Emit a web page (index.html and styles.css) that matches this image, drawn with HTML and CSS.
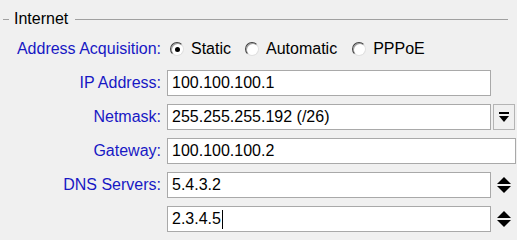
FILE: index.html
```html
<!DOCTYPE html>
<html lang="en">
<head>
  <meta charset="UTF-8" />
  <title>Internet</title>
  <link rel="stylesheet" href="styles.css">
</head>
<body>
  <div class="group-head">
    <span class="dash"></span>
    <span class="group-title">Internet</span>
    <span class="rule"></span>
  </div>

  <div class="acq-row">
    <span class="lbl">Address Acquisition:</span>
    <div class="radios">
      <span class="radio checked"></span><span class="opt">Static</span>
      <span class="radio"></span><span class="opt">Automatic</span>
      <span class="radio"></span><span class="opt">PPPoE</span>
    </div>
  </div>

  <div class="form">
    <span class="lbl">IP Address:</span>
    <div class="field">
      <div class="box">100.100.100.1</div>
    </div>

    <span class="lbl">Netmask:</span>
    <div class="field">
      <div class="box">255.255.255.192 (/26)</div>
      <div class="drop-btn"><span class="bar"></span><span class="tri-down"></span></div>
    </div>

    <span class="lbl">Gateway:</span>
    <div class="field">
      <div class="box wide">100.100.100.2</div>
    </div>

    <span class="lbl">DNS Servers:</span>
    <div class="field">
      <div class="box">5.4.3.2</div>
      <div class="spin"><span class="tri-up"></span><span class="tri-down"></span></div>
    </div>

    <span class="lbl"></span>
    <div class="field">
      <div class="box">2.3.4.5<span class="caret"></span></div>
      <div class="spin"><span class="tri-up"></span><span class="tri-down"></span></div>
    </div>
  </div>
</body>
</html>
```

FILE: styles.css
```css
* {
  box-sizing: border-box;
  margin: 0;
  padding: 0;
}

body {
  background: #f0f0f0;
  color: #000;
  font-family: 'Liberation Sans', Arial, sans-serif;
  font-size: 16px;
  line-height: 18px;
  padding: 10px 9px 0 3px;
}

.group-head {
  display: flex;
  align-items: center;
  height: 18px;
}

.dash {
  width: 6px;
  height: 1px;
  background: #a0a0a0;
}

.group-title {
  margin-left: 5px;
}

.rule {
  flex: 1;
  height: 1px;
  background: #a0a0a0;
  margin-left: 7px;
}

.lbl {
  color: #1818c4;
  text-align: right;
}

.acq-row {
  display: grid;
  grid-template-columns: 158px 1fr;
  column-gap: 6px;
  align-items: center;
  height: 24px;
  margin-top: 9px;
}

.radios {
  display: flex;
  align-items: center;
}

.radio {
  width: 14px;
  height: 14px;
  border-radius: 50%;
  background: #fff;
  border: 1px solid;
  border-color: #404040 #e0e0e0 #e0e0e0 #404040;
  box-shadow: inset 1px 1px 0 #a0a0a0;
  margin-left: 3px;
  margin-right: 7px;
  display: flex;
  align-items: center;
  justify-content: center;
}

.radio + .opt + .radio {
  margin-left: 14px;
}

.radio + .opt + .radio + .opt + .radio {
  margin-left: 15px;
}

.radio.checked::after {
  content: "";
  width: 5px;
  height: 5px;
  border-radius: 50%;
  background: #000;
}

.form {
  display: grid;
  grid-template-columns: 158px 1fr;
  column-gap: 6px;
  row-gap: 8px;
  align-items: center;
  margin-top: 9px;
}

.field {
  display: flex;
  align-items: stretch;
  height: 26px;
}

.box {
  width: 324px;
  background: #fff;
  border: 1px solid #a9a9a9;
  padding-left: 4px;
  display: flex;
  align-items: center;
  white-space: nowrap;
}

.box.wide {
  flex: 1;
}

.caret {
  width: 1px;
  height: 19px;
  background: #000;
  margin-left: 1px;
}

.drop-btn {
  width: 22px;
  margin-left: 2px;
  border: 1px solid #b4b4b4;
  display: flex;
  flex-direction: column;
  align-items: center;
  justify-content: center;
  gap: 2px;
}

.bar {
  width: 10px;
  height: 2px;
  background: #000;
}

.spin {
  width: 25px;
  display: flex;
  flex-direction: column;
  align-items: center;
  justify-content: center;
  gap: 2px;
}

.tri-up {
  width: 0;
  height: 0;
  border-left: 7px solid transparent;
  border-right: 7px solid transparent;
  border-bottom: 7px solid #000;
}

.tri-down {
  width: 0;
  height: 0;
  border-left: 5px solid transparent;
  border-right: 5px solid transparent;
  border-top: 6px solid #000;
}

.spin .tri-down {
  border-left-width: 7px;
  border-right-width: 7px;
  border-top-width: 7px;
}
```
